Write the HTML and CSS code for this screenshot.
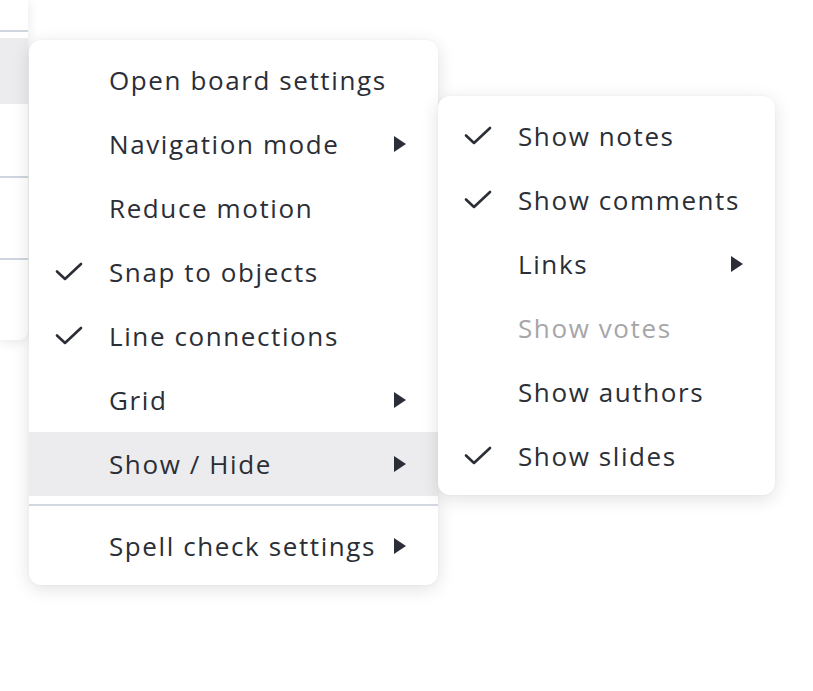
FILE: index.html
```html
<!DOCTYPE html>
<html lang="en">
<head>
<meta charset="utf-8">
<title>Board menu</title>
<link rel="stylesheet" href="styles.css">
</head>
<body>
<div class="page">
  <aside class="side">
    <div class="side-top"></div>
    <div class="side-line"></div>
    <div class="side-active"></div>
    <div class="side-gap1"></div>
    <div class="side-line"></div>
    <div class="side-gap2"></div>
    <div class="side-line"></div>
  </aside>

  <ul class="menu main-menu">
    <li class="item"><span class="check"></span><span class="label">Open board settings</span></li>
    <li class="item"><span class="check"></span><span class="label">Navigation mode</span><span class="arrow"></span></li>
    <li class="item"><span class="check"></span><span class="label">Reduce motion</span></li>
    <li class="item"><span class="check"><svg viewBox="0 0 28 20" width="28" height="20"><path d="M2 9.5 L10 17 L26 2" fill="none" stroke="#2b2e36" stroke-width="2.6" stroke-linecap="round" stroke-linejoin="round"/></svg></span><span class="label">Snap to objects</span></li>
    <li class="item"><span class="check"><svg viewBox="0 0 28 20" width="28" height="20"><path d="M2 9.5 L10 17 L26 2" fill="none" stroke="#2b2e36" stroke-width="2.6" stroke-linecap="round" stroke-linejoin="round"/></svg></span><span class="label">Line connections</span></li>
    <li class="item"><span class="check"></span><span class="label">Grid</span><span class="arrow"></span></li>
    <li class="item active"><span class="check"></span><span class="label">Show / Hide</span><span class="arrow"></span></li>
    <li class="sep"></li>
    <li class="item"><span class="check"></span><span class="label">Spell check settings</span><span class="arrow"></span></li>
  </ul>

  <ul class="menu sub-menu">
    <li class="item"><span class="check"><svg viewBox="0 0 28 20" width="28" height="20"><path d="M2 9.5 L10 17 L26 2" fill="none" stroke="#2b2e36" stroke-width="2.6" stroke-linecap="round" stroke-linejoin="round"/></svg></span><span class="label">Show notes</span></li>
    <li class="item"><span class="check"><svg viewBox="0 0 28 20" width="28" height="20"><path d="M2 9.5 L10 17 L26 2" fill="none" stroke="#2b2e36" stroke-width="2.6" stroke-linecap="round" stroke-linejoin="round"/></svg></span><span class="label">Show comments</span></li>
    <li class="item"><span class="check"></span><span class="label">Links</span><span class="arrow"></span></li>
    <li class="item disabled"><span class="check"></span><span class="label">Show votes</span></li>
    <li class="item"><span class="check"></span><span class="label">Show authors</span></li>
    <li class="item"><span class="check"><svg viewBox="0 0 28 20" width="28" height="20"><path d="M2 9.5 L10 17 L26 2" fill="none" stroke="#2b2e36" stroke-width="2.6" stroke-linecap="round" stroke-linejoin="round"/></svg></span><span class="label">Show slides</span></li>
  </ul>
</div>
</body>
</html>
```

FILE: styles.css
```css
* { box-sizing: border-box; }
html, body {
  margin: 0;
  padding: 0;
  background: #ffffff;
}
body {
  font-family: "Open Sans", "Noto Sans", sans-serif;
  color: #2b2e36;
}
.page {
  position: relative;
  width: 813px;
  height: 691px;
  overflow: hidden;
}

/* left panel under the menu */
.side {
  width: 28px;
  height: 340px;
  background: #ffffff;
  border-radius: 0 0 9px 0;
  box-shadow: 0 2px 12px rgba(0, 0, 0, 0.10);
  display: flex;
  flex-direction: column;
}
.side-top { height: 30px; }
.side-line { height: 2px; background: #cfd5de; }
.side-active { height: 66px; margin-top: 6px; background: #ececee; }
.side-gap1 { height: 72px; }
.side-gap2 { height: 80px; }

/* menus */
.menu {
  list-style: none;
  margin: 0;
  position: absolute;
  background: #ffffff;
  border-radius: 12px;
  box-shadow: 0 4px 18px rgba(0, 0, 0, 0.12), 0 0 3px rgba(0, 0, 0, 0.04);
}
.main-menu {
  left: 29px;
  top: 40px;
  width: 409px;
  padding: 8px 0 7px;
}
.sub-menu {
  left: 438px;
  top: 96px;
  width: 337px;
  padding: 8px 0 7px;
}
.item {
  height: 64px;
  display: flex;
  align-items: center;
  font-size: 26px;
  letter-spacing: 1.6px;
  white-space: nowrap;
}
.item.active { background: #ececee; }
.item.disabled { color: #a6a6a8; }
.check {
  width: 80px;
  flex: none;
  display: flex;
  justify-content: flex-end;
  padding-right: 26px;
}
.check svg { display: block; }
.label { flex: 1; }
.arrow {
  flex: none;
  width: 0;
  height: 0;
  border-top: 8px solid transparent;
  border-bottom: 8px solid transparent;
  border-left: 12px solid #2b2e36;
  margin-right: 32px;
}
.sep {
  height: 2px;
  background: #d2d8e0;
  margin: 8px 0 8px;
}
```
